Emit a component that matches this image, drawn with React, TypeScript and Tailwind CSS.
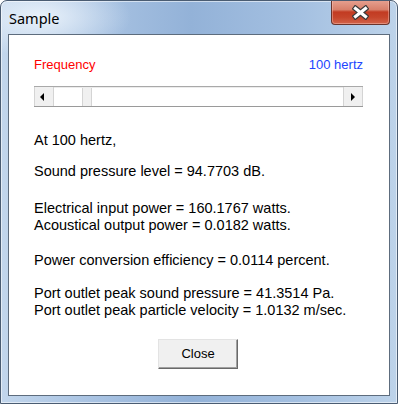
export default function App() {
  return (
    <div className="w-[398px] h-[404px] relative flex flex-col overflow-hidden rounded-t-[7px] border border-[#4a5c72] bg-[radial-gradient(ellipse_90px_40px_at_40px_16px,rgba(235,243,251,0.95),rgba(235,243,251,0)),linear-gradient(90deg,#c2d6ec_0%,#aac4e3_22%,#93b2d8_48%,#a4c0e1_75%,#bdd3ea_100%)] shadow-[inset_0_0_0_1px_rgba(255,255,255,0.55)] font-['Liberation_Sans',Arial,sans-serif]">
      <div className="h-[33px] shrink-0 pl-[8px] pt-[6px]">
        <span className="text-[14.5px] leading-[20px] text-black font-['Noto_Sans','Open_Sans',sans-serif]">
          Sample
        </span>
      </div>

      <div className="absolute top-[-1px] right-[7px] w-[59px] h-[25px] rounded-b-[4px] border border-t-0 border-[#6a342c] bg-[linear-gradient(180deg,#e6a292_0%,#d8806b_40%,#c23b22_50%,#c6452b_72%,#d2634a_100%)] shadow-[inset_0_0_0_1px_rgba(255,210,200,0.4)] flex items-center justify-center">
        <svg width="17" height="15" viewBox="0 0 17 15" className="mt-[1px]">
          <path d="M3.5 3.5 L13.5 11.5 M13.5 3.5 L3.5 11.5" stroke="#3a3a3a" strokeWidth="5.6" strokeLinecap="square" fill="none" />
          <path d="M3.5 3.5 L13.5 11.5 M13.5 3.5 L3.5 11.5" stroke="#ffffff" strokeWidth="3.2" strokeLinecap="square" fill="none" />
        </svg>
      </div>

      <div className="flex-1 mx-[7px] mb-[7px] border border-[#5d6c7d] bg-white flex flex-col pl-[25px] pr-[26px] pt-[22px]">
        <div className="flex justify-between text-[13px] leading-[15px]">
          <span className="text-[#ff0000]">Frequency</span>
          <span className="text-[#2146ff]">100 hertz</span>
        </div>

        <div className="mt-[14px] h-[21px] flex border-t border-b border-t-[#a9a9a9] border-b-[#9a9a9a]">
          <div className="w-[20px] bg-[#f0f0f0] border-l border-r border-[#d4d4d4] flex items-center justify-center">
            <svg width="5" height="8" viewBox="0 0 5 8" className="mr-[3px]">
              <path d="M4 0 L0 4 L4 8 Z" fill="#000" />
            </svg>
          </div>
          <div className="flex-1 flex bg-white border-t border-[#ececec]">
            <div className="w-[28px]" />
            <div className="w-[10px] bg-[#f0f0f0] border-x border-[#d4d4d4]" />
            <div className="flex-1" />
          </div>
          <div className="w-[20px] bg-[#f0f0f0] border-l border-r border-[#d4d4d4] flex items-center justify-center">
            <svg width="5" height="8" viewBox="0 0 5 8" className="ml-[1px]">
              <path d="M0 0 L4 4 L0 8 Z" fill="#000" />
            </svg>
          </div>
        </div>

        <div className="mt-[25px] text-[14.5px] leading-[17px] text-black">
          <p>At 100 hertz,</p>
          <p className="mt-[14px]">Sound pressure level = 94.7703 dB.</p>
          <p className="mt-[20px]">Electrical input power = 160.1767 watts.</p>
          <p>Acoustical output power = 0.0182 watts.</p>
          <p className="mt-[18px]">Power conversion efficiency = 0.0114 percent.</p>
          <p className="mt-[16px]">Port outlet peak sound pressure = 41.3514 Pa.</p>
          <p>Port outlet peak particle velocity = 1.0132 m/sec.</p>
        </div>

        <div className="mt-[20px] flex justify-center">
          <button className="w-[80px] h-[30px] bg-[#f0f0f0] border border-t-[#e3e3e3] border-l-[#e3e3e3] border-r-[#696969] border-b-[#696969] shadow-[inset_-1px_-1px_0_#a0a0a0] text-[13px] text-black -ml-[1px]">
            Close
          </button>
        </div>
      </div>
    </div>
  );
}
